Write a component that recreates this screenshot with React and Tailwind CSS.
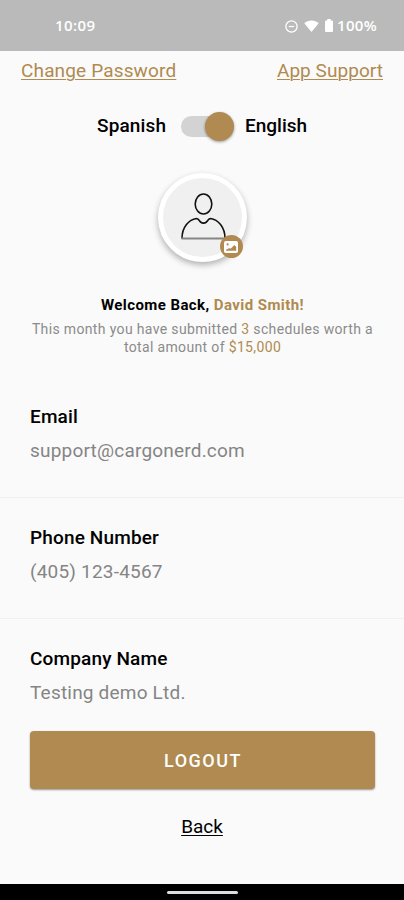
import React, { useState } from 'react';

const fields = [
  { label: 'Email', value: 'support@cargonerd.com' },
  { label: 'Phone Number', value: '(405) 123-4567' },
  { label: 'Company Name', value: 'Testing demo Ltd.' },
];

const StatusBar = () => (
  <div className="flex h-[51px] items-center justify-between bg-[#bababa] pl-[55px] pr-[27px] text-white">
    <span className="font-['Open_Sans',sans-serif] text-[15px] font-semibold leading-none tracking-[0.4px]">10:09</span>
    <div className="flex items-center">
      <svg className="mt-[1px]" width="13" height="13" viewBox="0 0 13 13" fill="none" stroke="currentColor" strokeWidth="1.3">
        <circle cx="6.5" cy="6.5" r="5.6" />
        <path d="M3.8 6.5h5.4" />
      </svg>
      <svg className="ml-[6px]" width="15" height="12" viewBox="0 0 15 12" fill="currentColor">
        <path d="M7.5 12 0.3 3.2C4.2-.5 10.8-.5 14.7 3.2Z" />
      </svg>
      <svg className="ml-[6px]" width="8" height="13" viewBox="0 0 8 13" fill="currentColor">
        <path d="M2.3 0h3.4v1.4H7a1 1 0 0 1 1 1V12a1 1 0 0 1-1 1H1a1 1 0 0 1-1-1V2.4a1 1 0 0 1 1-1h1.3Z" />
      </svg>
      <span className="ml-[4px] font-['Open_Sans',sans-serif] text-[15px] font-semibold leading-none tracking-[0.3px]">100%</span>
    </div>
  </div>
);

const Avatar = () => (
  <div className="relative mx-auto mt-[30px] flex h-[89px] w-[89px] items-center justify-center rounded-full border-[5px] border-white bg-[#f0f0f0] shadow-[0_3px_6px_rgba(0,0,0,0.3)]">
    <svg className="mb-[2px] ml-[2px] h-[50px] w-[46px]" viewBox="0 0 46 50" fill="none" stroke="#111" strokeWidth="1.6">
      <ellipse cx="23.5" cy="12" rx="8.3" ry="10" />
      <path d="M2 46.5C2 35 9 27.5 16.5 26.5C18.5 26.5 19 28.5 20.5 30C22.5 31.5 24.5 31.5 26.5 30C28 28.5 28.5 26.5 30.5 26.5C38 27.5 45 35 45 46.5" />
      <path d="M1.5 46.5h44" stroke="#858585" strokeWidth="2" />
    </svg>
    <button
      aria-label="Change photo"
      className="absolute -bottom-[1px] -right-[1px] flex h-[23px] w-[23px] items-center justify-center rounded-full bg-[#b08a50]"
    >
      <svg width="14" height="12" viewBox="0 0 14 12">
        <rect width="14" height="12" rx="1.8" fill="#fff" />
        <circle cx="3.6" cy="3.4" r="1.1" fill="#b08a50" />
        <path d="M2 9.8V8.8L5 7.2L7 7.4L10.2 4L12.2 5.8V9.8Z" fill="#b08a50" />
      </svg>
    </button>
  </div>
);

export default function App() {
  const [english, setEnglish] = useState(true);

  return (
    <div className="flex h-[900px] w-[404px] flex-col overflow-hidden bg-[#fafafa] font-[Roboto,sans-serif] text-black">
      <StatusBar />

      <div className="flex h-[40px] items-center justify-between pl-[21px] pr-[21px] text-[19px] text-[#b08a50]">
        <a href="#password" className="tracking-[0.15px] underline decoration-1 underline-offset-2">Change Password</a>
        <a href="#support" className="tracking-[0.05px] underline decoration-1 underline-offset-2">App Support</a>
      </div>

      <div className="mt-[18px] flex h-[34px] items-center pl-[97px] text-[19px] font-medium tracking-[0.15px]">
        <span className="w-[84px]">Spanish</span>
        <button
          role="switch"
          aria-label="Language"
          aria-checked={english}
          onClick={() => setEnglish(!english)}
          className={`flex h-[21px] w-[53px] items-center rounded-full bg-[#d3d3d3] ${english ? 'justify-end' : 'justify-start'}`}
        >
          <span className="h-[29px] w-[29px] rounded-full bg-[#b08a50] shadow-[0_1px_3px_rgba(0,0,0,0.4)]" />
        </button>
        <span className="ml-[11px] tracking-normal">English</span>
      </div>

      <Avatar />

      <div className="mt-[33px] pl-[1px] text-center">
        <h1 className="text-[15px] font-bold leading-[20px] tracking-[0.42px]">
          Welcome Back, <span className="text-[#b08a50]">David Smith!</span>
        </h1>
        <p className="mt-[5px] text-[14px] leading-[18px] tracking-[0.35px] text-[#8b8b8b]">
          This month you have submitted <span className="text-[#b08a50]">3</span> schedules worth a
          <br />
          total amount of <span className="text-[#b08a50]">$15,000</span>
        </p>
      </div>

      <div className="mt-[21px]">
        {fields.map((field) => (
          <div key={field.label} className="h-[121px] border-b border-[#f0f0f0] pl-[30px] pt-[27px] tracking-[0.2px] last:h-[112px] last:border-0">
            <p className="text-[19px] font-medium leading-[26px] tracking-[0.15px]">{field.label}</p>
            <p className="mt-[8px] text-[19px] leading-[26px] text-[#858585]">{field.value}</p>
          </div>
        ))}
      </div>

      <button className="ml-[30px] mr-[29px] h-[58px] shrink-0 rounded-[4px] bg-[#b08a50] pl-[1px] text-[18px] font-medium tracking-[1.5px] text-white shadow-[0_1px_2px_rgba(0,0,0,0.4)]">
        LOGOUT
      </button>
      <a href="#back" className="mx-auto mt-[24px] text-[19px] leading-[28px] underline decoration-1 underline-offset-2">Back</a>

      <div className="mt-auto flex h-[16px] items-center justify-center bg-black">
        <div className="h-[3px] w-[71px] rounded-full bg-[#dedede]" />
      </div>
    </div>
  );
}
